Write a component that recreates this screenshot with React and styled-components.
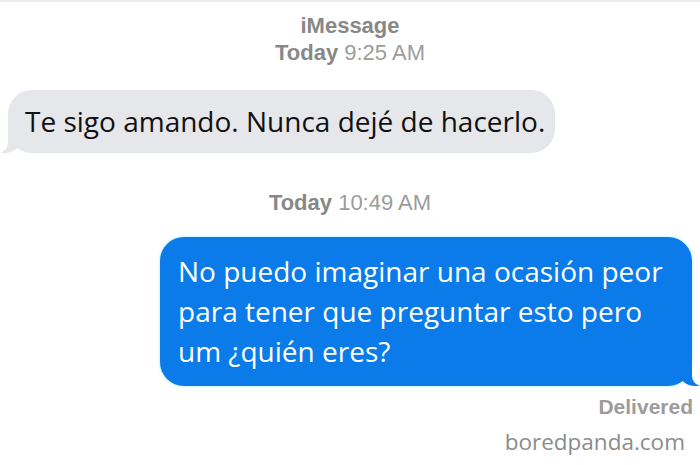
import styled, { createGlobalStyle } from 'styled-components'

const GlobalStyle = createGlobalStyle`
    html, body {
        margin: 0;
        padding: 0;
        background: #fff;
    }
`

const Page = styled.div`
    width: 700px;
    height: 465px;
    box-sizing: border-box;
    background: #fff;
    border-top: 2px solid #ececec;
    display: flex;
    flex-direction: column;
    overflow: hidden;
    font-family: "Open Sans", "Noto Sans", sans-serif;
`

const Stamp = styled.div`
    margin-top: ${props => props.top}px;
    text-align: center;
    font-family: "Liberation Sans", Arial, sans-serif;
    font-size: 22px;
    line-height: 27px;
    color: #9c9c9c;

    b {
        font-weight: 700;
        color: #888;
    }
`

const Row = styled.div`
    display: flex;
    justify-content: ${props => props.side === 'right' ? 'flex-end' : 'flex-start'};
    margin-top: ${props => props.top}px;
    padding: 0 8px;
`

const Bubble = styled.div`
    position: relative;
    box-sizing: border-box;
    font-size: 28px;
    line-height: ${props => props.sent ? 40 : 35}px;
    padding: ${props => props.sent ? '14px 18px 15px' : '14px 10px 14px 17px'};
    border-radius: 24px;
    background: ${props => props.sent ? '#0a7be9' : '#e6e7eb'};
    color: ${props => props.sent ? '#fff' : '#111'};
    width: ${props => props.sent ? '532px' : 'auto'};
    box-shadow: ${props => props.sent ? '0 0 3px rgba(90, 220, 255, 0.6)' : 'none'};

    &::before {
        content: '';
        position: absolute;
        bottom: 0;
        width: 20px;
        height: 22px;
        background: ${props => props.sent ? '#0a7be9' : '#e6e7eb'};
        ${props => props.sent
            ? 'right: -7px; border-bottom-left-radius: 16px 14px;'
            : 'left: -7px; border-bottom-right-radius: 16px 14px;'}
    }

    &::after {
        content: '';
        position: absolute;
        bottom: 0;
        width: 10px;
        height: 22px;
        background: #fff;
        ${props => props.sent
            ? 'right: -10px; border-bottom-left-radius: 10px;'
            : 'left: -10px; border-bottom-right-radius: 10px;'}
    }
`

const Status = styled.div`
    margin-top: 9px;
    padding-right: 7px;
    text-align: right;
    font-family: "Liberation Sans", Arial, sans-serif;
    font-weight: 700;
    font-size: 21px;
    line-height: 24px;
    color: #9c9c9c;
`

const Watermark = styled.div`
    margin-top: 10px;
    padding-right: 15px;
    text-align: right;
    font-family: "Open Sans", "Noto Sans", sans-serif;
    font-size: 22.5px;
    line-height: 26px;
    color: #8c8c8c;
`

export default function App() {
    return (
        <>
            <GlobalStyle />
            <Page>
                <Stamp top={10}>
                    <b>iMessage</b><br />
                    <b>Today</b> 9:25 AM
                </Stamp>
                <Row top={24}>
                    <Bubble>Te sigo amando. Nunca dejé de hacerlo.</Bubble>
                </Row>
                <Stamp top={36}>
                    <b>Today</b> 10:49 AM
                </Stamp>
                <Row side="right" top={21}>
                    <Bubble sent>No puedo imaginar una ocasión peor para tener que preguntar esto pero um ¿quién eres?</Bubble>
                </Row>
                <Status>Delivered</Status>
                <Watermark>boredpanda.com</Watermark>
            </Page>
        </>
    )
}
